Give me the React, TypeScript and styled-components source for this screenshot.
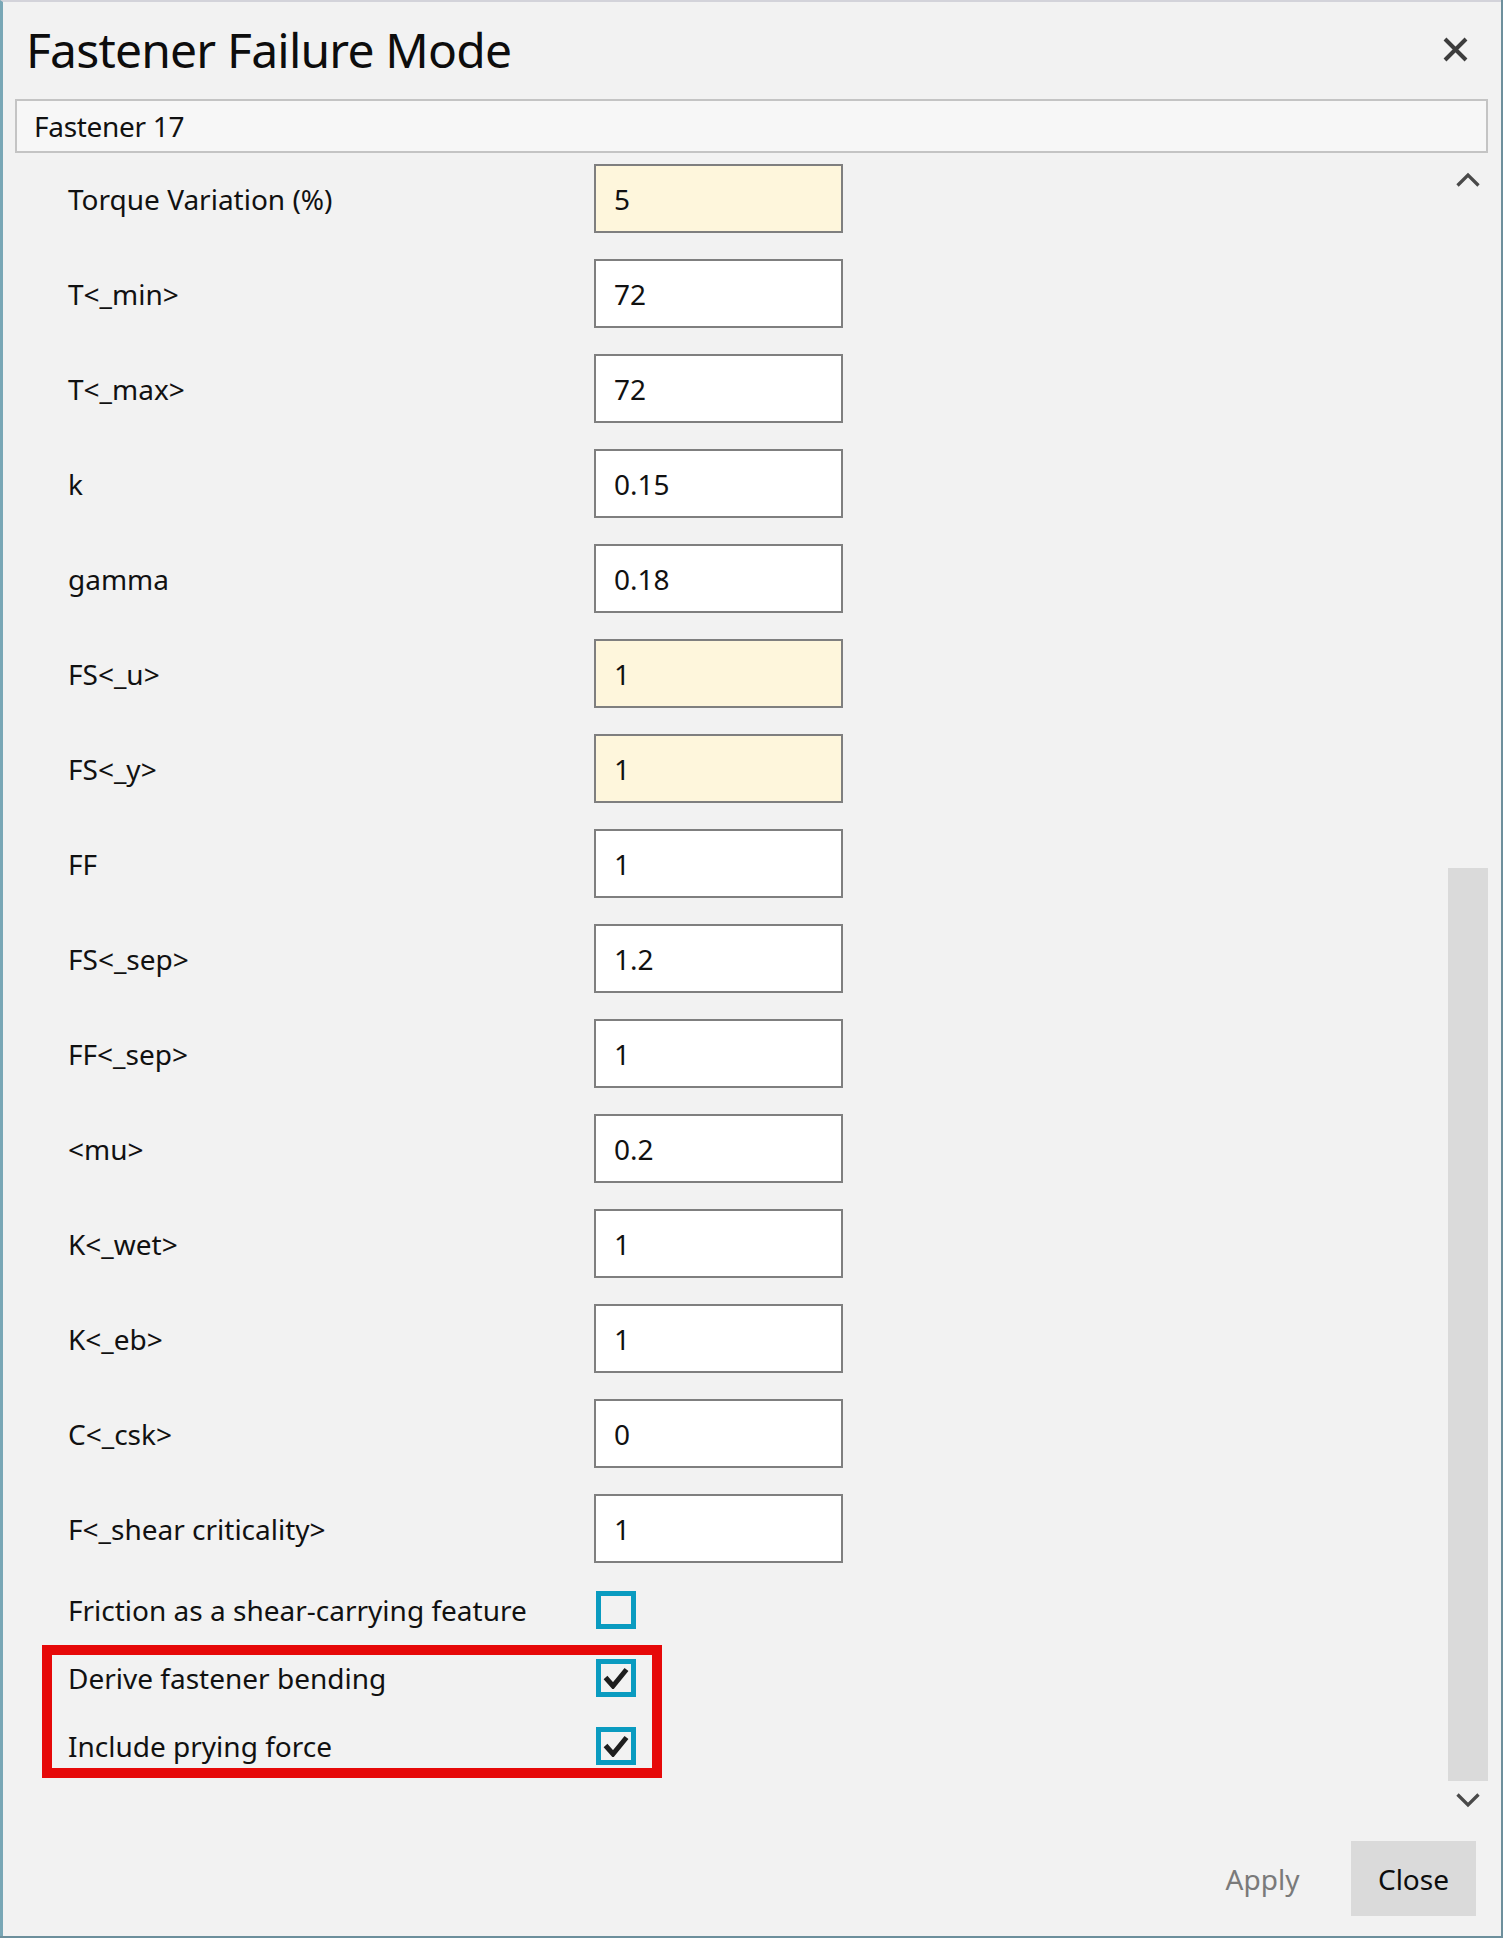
import React from "react";
import styled, { createGlobalStyle } from "styled-components";

const GlobalStyle = createGlobalStyle`
  html, body {
    margin: 0;
    padding: 0;
    background: #6d8f9c;
  }
  * {
    box-sizing: border-box;
  }
`;

const Dialog = styled.div`
  width: 1501px;
  height: 1936px;
  display: flex;
  flex-direction: column;
  background: #f2f2f2;
  border-left: 3px solid #79a7b6;
  border-top: 2px solid #d3d3da;
  font-family: "Noto Sans", "Open Sans", sans-serif;
  color: #111;
`;

const TitleBar = styled.div`
  height: 97px;
  display: flex;
  align-items: center;
  justify-content: space-between;
  padding: 0 33px 2px 23px;
`;

const Title = styled.h1`
  margin: 0;
  font-size: 48px;
  font-weight: 400;
  letter-spacing: -0.8px;
  line-height: 1;
  color: #0d0d0d;
`;

const IconButton = styled.button`
  width: 25px;
  height: 25px;
  padding: 0;
  border: none;
  background: transparent;
  display: flex;
  align-items: center;
  justify-content: center;
  cursor: pointer;
`;

const HeaderField = styled.div`
  height: 54px;
  margin: 0 13px 0 12px;
  display: flex;
  align-items: center;
  padding-left: 17px;
  border: 2px solid #c4c4c4;
  background: #f7f7f7;
  font-size: 28px;
  letter-spacing: -0.3px;
`;

const Body = styled.div`
  flex: 1;
  display: flex;
  min-height: 0;
`;

const FormColumn = styled.div`
  flex: 1;
  padding: 11px 0 0 65px;
  display: flex;
  flex-direction: column;
`;

const FieldList = styled.div`
  display: flex;
  flex-direction: column;
  gap: 26px;
`;

const FieldRow = styled.div`
  display: flex;
  align-items: center;
  height: 69px;
`;

const Label = styled.span`
  width: 526px;
  font-size: 28px;
  line-height: 1;
  white-space: nowrap;
`;

const ValueInput = styled.input<{ $highlight?: boolean }>`
  width: 249px;
  height: 69px;
  padding: 0 0 0 18px;
  border: 2px solid #7f7f7f;
  border-radius: 0;
  outline: none;
  background: ${(p) => (p.$highlight ? "#fef6dc" : "#ffffff")};
  font-family: "Noto Sans", "Open Sans", sans-serif;
  font-size: 28px;
  color: #111;
`;

const CheckList = styled.div`
  margin-top: 28px;
  display: flex;
  flex-direction: column;
`;

const CheckRow = styled.div`
  display: flex;
  align-items: center;
  height: 38px;
`;

const Box = styled.span`
  width: 40px;
  height: 38px;
  margin-left: 2px;
  border: 5px solid #0a9bc0;
  display: flex;
  align-items: center;
  justify-content: center;
`;

const Callout = styled.div`
  margin: 16px 0 0 -26px;
  width: 620px;
  padding: 4px 0 3px 16px;
  border: 10px solid #e60909;
  display: flex;
  flex-direction: column;
  gap: 30px;
`;

const ScrollColumn = styled.div`
  width: 40px;
  margin-right: 13px;
  display: flex;
  flex-direction: column;
`;

const ArrowButton = styled.div<{ $h: number }>`
  height: ${(p) => p.$h}px;
  display: flex;
  align-items: center;
  justify-content: center;
`;

const Track = styled.div`
  flex: 1;
  display: flex;
  flex-direction: column;
  justify-content: flex-end;
`;

const Thumb = styled.div`
  height: 913px;
  background: #dadada;
`;

const Footer = styled.div`
  height: 117px;
  padding: 22px 25px 20px 0;
  display: flex;
  justify-content: flex-end;
  gap: 26px;
`;

const FooterButton = styled.button<{ $primary?: boolean }>`
  width: 125px;
  height: 75px;
  border: none;
  padding: 0;
  background: ${(p) => (p.$primary ? "#dadada" : "transparent")};
  color: ${(p) => (p.$primary ? "#0d0d0d" : "#7a7a7a")};
  font-family: "Noto Sans", "Open Sans", sans-serif;
  font-size: 28px;
  cursor: pointer;
`;

type Field = { label: string; value: string; highlight?: boolean };

const fields: Field[] = [
  { label: "Torque Variation (%)", value: "5", highlight: true },
  { label: "T<_min>", value: "72" },
  { label: "T<_max>", value: "72" },
  { label: "k", value: "0.15" },
  { label: "gamma", value: "0.18" },
  { label: "FS<_u>", value: "1", highlight: true },
  { label: "FS<_y>", value: "1", highlight: true },
  { label: "FF", value: "1" },
  { label: "FS<_sep>", value: "1.2" },
  { label: "FF<_sep>", value: "1" },
  { label: "<mu>", value: "0.2" },
  { label: "K<_wet>", value: "1" },
  { label: "K<_eb>", value: "1" },
  { label: "C<_csk>", value: "0" },
  { label: "F<_shear criticality>", value: "1" },
];

const CloseIcon = () => (
  <svg width="25" height="25" viewBox="0 0 25 25">
    <path d="M2 2 L23 23 M23 2 L2 23" stroke="#3d3d3d" strokeWidth="4" fill="none" />
  </svg>
);

const Chevron = ({ up }: { up?: boolean }) => (
  <svg width="24" height="15" viewBox="0 0 24 15">
    <polyline
      points={up ? "1.5,13.5 12,3 22.5,13.5" : "1.5,1.5 12,12 22.5,1.5"}
      stroke="#4a4a4a"
      strokeWidth="3.3"
      fill="none"
    />
  </svg>
);

const CheckMark = () => (
  <svg width="26" height="22" viewBox="0 0 26 22">
    <polyline
      points="2.5,10.5 10,19 23.5,2.5"
      stroke="#1e1e1e"
      strokeWidth="5"
      fill="none"
      strokeLinejoin="miter"
    />
  </svg>
);

const Check = ({ label, checked }: { label: string; checked: boolean }) => (
  <CheckRow>
    <Label>{label}</Label>
    <Box role="checkbox" aria-checked={checked}>
      {checked && <CheckMark />}
    </Box>
  </CheckRow>
);

export default function App() {
  return (
    <>
      <GlobalStyle />
      <Dialog>
        <TitleBar>
          <Title>Fastener Failure Mode</Title>
          <IconButton aria-label="Close">
            <CloseIcon />
          </IconButton>
        </TitleBar>
        <HeaderField>Fastener 17</HeaderField>
        <Body>
          <FormColumn>
            <FieldList>
              {fields.map((f) => (
                <FieldRow key={f.label}>
                  <Label>{f.label}</Label>
                  <ValueInput readOnly value={f.value} $highlight={f.highlight} />
                </FieldRow>
              ))}
            </FieldList>
            <CheckList>
              <Check label="Friction as a shear-carrying feature" checked={false} />
              <Callout>
                <Check label="Derive fastener bending" checked />
                <Check label="Include prying force" checked />
              </Callout>
            </CheckList>
          </FormColumn>
          <ScrollColumn>
            <ArrowButton $h={53}>
              <Chevron up />
            </ArrowButton>
            <Track>
              <Thumb />
            </Track>
            <ArrowButton $h={38}>
              <Chevron />
            </ArrowButton>
          </ScrollColumn>
        </Body>
        <Footer>
          <FooterButton>Apply</FooterButton>
          <FooterButton $primary>Close</FooterButton>
        </Footer>
      </Dialog>
    </>
  );
}
